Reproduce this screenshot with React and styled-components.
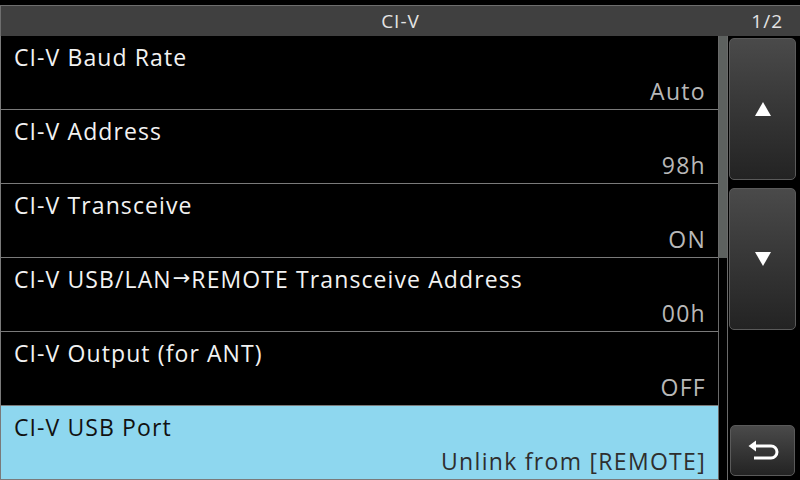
import React from "react";
import styled, { createGlobalStyle } from "styled-components";

const items = [
  { label: "CI-V Baud Rate", value: "Auto" },
  { label: "CI-V Address", value: "98h" },
  { label: "CI-V Transceive", value: "ON" },
  { label: ["CI-V USB/LAN", "REMOTE Transceive Address"], value: "00h" },
  { label: "CI-V Output (for ANT)", value: "OFF" },
  { label: "CI-V USB Port", value: "Unlink from [REMOTE]", active: true },
];

const App = () => {
  return (
    <Screen>
      <Global />
      <TitleBar>
        <span>CI-V</span>
        <Page>1/2</Page>
      </TitleBar>
      <Body>
        <List>
          {items.map((it, i) => (
            <Row key={i} active={it.active}>
              <Label>
                {Array.isArray(it.label) ? (
                  <>
                    {it.label[0]}
                    <Arrow>{"\u2192"}</Arrow>
                    {it.label[1]}
                  </>
                ) : (
                  it.label
                )}
              </Label>
              <Value active={it.active}>{it.value}</Value>
            </Row>
          ))}
        </List>
        <Track>
          <Thumb />
        </Track>
        <Side>
          <Key tall>
            <svg width="16" height="14" viewBox="0 0 16 14">
              <path d="M8 0 L16 14 L0 14 Z" fill="#fff" />
            </svg>
          </Key>
          <Key tall>
            <svg width="16" height="14" viewBox="0 0 16 14">
              <path d="M0 0 L16 0 L8 14 Z" fill="#fff" />
            </svg>
          </Key>
          <Spacer />
          <Key back>
            <svg width="32" height="22" viewBox="0 0 32 22">
              <path
                d="M5 6 H24 A6 6 0 0 1 24 18 H7"
                fill="none"
                stroke="#fff"
                strokeWidth="3"
              />
              <path d="M1.5 6 L9 0.5 L9 11.5 Z" fill="#fff" />
            </svg>
          </Key>
        </Side>
      </Body>
    </Screen>
  );
};

export default App;

const Global = createGlobalStyle`
  body {
    margin: 0;
    background: #000;
  }
`;
const Screen = styled.div`
  width: 800px;
  height: 480px;
  background: #000;
  display: flex;
  flex-direction: column;
  font-family: "Open Sans", "Noto Sans", sans-serif;
  overflow: hidden;
`;
const TitleBar = styled.div`
  margin-top: 5px;
  height: 30px;
  border-top: 1px solid #6e6e6e;
  border-left: 1px solid #6e6e6e;
  background: #404040;
  color: #e4e4e4;
  font-size: 19px;
  letter-spacing: 1px;
  display: flex;
  align-items: center;
  justify-content: center;
  position: relative;
`;
const Page = styled.span`
  position: absolute;
  right: 17px;
`;
const Body = styled.div`
  flex: 1;
  display: flex;
`;
const List = styled.div`
  width: 718px;
  display: flex;
  flex-direction: column;
`;
const Row = styled.div`
  height: 74px;
  box-sizing: border-box;
  border-bottom: 1px solid #7a7a7a;
  border-left: 1px solid #7a7a7a;
  background: ${({ active }) => (active ? "#8ed7ef" : "#000")};
  color: ${({ active }) => (active ? "#111" : "#f2f2f2")};
  display: flex;
  flex-direction: column;
  justify-content: space-between;
  padding: 6px 12px 3px 13px;
`;
const Label = styled.span`
  font-size: 23px;
  letter-spacing: 1.1px;
  line-height: 30px;
  white-space: nowrap;
`;
const Arrow = styled.span`
  font-family: "DejaVu Sans", sans-serif;
  font-size: 21px;
  letter-spacing: 0;
  position: relative;
  top: -3px;
  margin: 0 1px;
`;
const Value = styled.span`
  font-size: 23px;
  letter-spacing: 1.3px;
  line-height: 30px;
  text-align: right;
  color: ${({ active }) => (active ? "#2e2e2e" : "#b8b8b8")};
`;
const Track = styled.div`
  width: 8px;
  border-left: 1px solid #6a6a6a;
  border-right: 1px solid #6a6a6a;
`;
const Thumb = styled.div`
  height: 222px;
  background: #5d615f;
`;
const Side = styled.div`
  flex: 1;
  display: flex;
  flex-direction: column;
  padding: 2px 4px 4px 1px;
  gap: 8px;
`;
const Spacer = styled.div`
  flex: 1;
`;
const Key = styled.div`
  height: ${({ tall }) => (tall ? "142px" : "51px")};
  margin: ${({ back }) => (back ? "0 1px" : "0")};
  border: 1px solid #5a5a5a;
  border-radius: 5px;
  background: linear-gradient(#4a4a4a, #232323);
  display: flex;
  align-items: center;
  justify-content: center;
  box-sizing: border-box;
`;
